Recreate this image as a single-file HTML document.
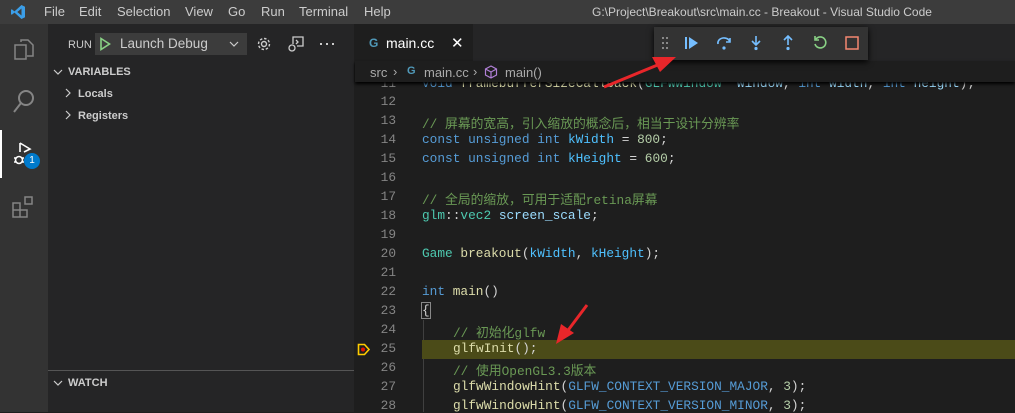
<!DOCTYPE html>
<html><head><meta charset="utf-8"><style>
*{margin:0;padding:0;box-sizing:border-box}
body{width:1015px;height:412px;overflow:hidden;background:#1e1e1e;font-family:"Liberation Sans","Noto Sans CJK SC",sans-serif;position:relative;color:#ccc}
.abs{position:absolute}
#title{left:0;top:0;width:1015px;height:24px;background:#3c3c3c;font-size:13px;color:#ccc}
#title span{position:absolute;top:4px}
#act{left:0;top:24px;width:48px;height:388px;background:#333}
#side{left:48px;top:24px;width:306px;height:388px;background:#252526;font-size:11px}
.code{font-family:"Liberation Mono","Noto Sans CJK SC",monospace;font-size:12.8px;white-space:pre;color:#d4d4d4}
.ln{position:absolute;left:355px;width:41px;text-align:right;color:#858585;font-family:"Liberation Mono",monospace;font-size:12.8px}
.cl{position:absolute;left:422px}
.k{color:#569cd6}.c{color:#6a9955}.f{color:#dcdcaa}.n{color:#b5cea8}.t{color:#4ec9b0}.v{color:#9cdcfe}.m{color:#4fc1ff}
</style></head><body>
<div id="title" class="abs">
<svg class="abs" style="left:10px;top:4px" width="16" height="16" viewBox="0 0 16 16"><path d="M11.5 1 L15 2.7 V13.3 L11.5 15 L4.5 8.6 L1.8 10.7 L1 10.2 V5.8 L1.8 5.3 L4.5 7.4 Z M11.5 4.5 L7.3 8 L11.5 11.5Z" fill="#3b9ee8" fill-rule="evenodd"/></svg>
<span style="left:44px">File</span><span style="left:79px">Edit</span><span style="left:117px">Selection</span><span style="left:185px">View</span><span style="left:228px">Go</span><span style="left:261px">Run</span><span style="left:299px">Terminal</span><span style="left:364px">Help</span>
<span style="left:592px;font-size:12px;top:5px">G:\Project\Breakout\src\main.cc - Breakout - Visual Studio Code</span>
</div>
<div id="act" class="abs">
<svg class="abs" style="left:12px;top:13px" width="24" height="24" viewBox="0 0 24 24" fill="none" stroke="#858585" stroke-width="1.5"><path d="M9 5V3h7l5 5v11h-6"/><rect x="3" y="8" width="11" height="14"/></svg>
<svg class="abs" style="left:12px;top:65px" width="24" height="26" viewBox="0 0 24 26" fill="none" stroke="#858585" stroke-width="2"><circle cx="14" cy="9" r="7"/><path d="M9 14L2 23"/></svg>
<div class="abs" style="left:0;top:106px;width:2px;height:48px;background:#fff"></div>
<svg class="abs" style="left:11px;top:117px" width="26" height="26" viewBox="0 0 26 26" fill="none" stroke="#fff" stroke-width="1.6"><path d="M9 2v9M9 2l10 6-6 3"/><circle cx="8" cy="19" r="3.5"/><path d="M3 17h2M3 21h2M11 17h2M11 21h2"/></svg>
<div class="abs" style="left:24px;top:129px;width:16px;height:16px;border-radius:50%;background:#007acc;color:#fff;font-size:10px;text-align:center;line-height:16px">1</div>
<svg class="abs" style="left:12px;top:171px" width="24" height="24" viewBox="0 0 24 24" fill="none" stroke="#858585" stroke-width="1.5"><path d="M1 8h7v7H1zM1 15h7v7H1zM8 15h7v7H8z"/><rect x="13" y="2" width="7" height="7"/></svg>
</div>
<div id="side" class="abs">
<span class="abs" style="left:20px;top:15px;font-size:11px;color:#ccc">RUN</span>
<div class="abs" style="left:47px;top:9px;width:152px;height:22px;background:#3c3c3c"></div>
<svg class="abs" style="left:51px;top:13px" width="12" height="14" viewBox="0 0 12 14"><path d="M2 1.5L10.5 7L2 12.5Z" fill="none" stroke="#89d185" stroke-width="1.6"/></svg>
<span class="abs" style="left:72px;top:12px;font-size:13.5px;color:#ccc">Launch Debug</span>
<svg class="abs" style="left:181px;top:16px" width="10" height="8" viewBox="0 0 10 8"><path d="M1 2l4 4 4-4" fill="none" stroke="#ccc" stroke-width="1.2"/></svg>
<svg class="abs" style="left:208px;top:12px" width="16" height="16" viewBox="0 0 16 16" fill="none" stroke="#ccc" stroke-width="1.4"><circle cx="8" cy="8" r="2.5"/><circle cx="8" cy="8" r="5.5" stroke-dasharray="2.5 1.8"/></svg>
<svg class="abs" style="left:239px;top:11px" width="18" height="18" viewBox="0 0 18 18" fill="none" stroke="#ccc" stroke-width="1.3"><path d="M6 9V2h10v9h-6M9 5l2 2-2 2"/><circle cx="5" cy="13" r="3"/></svg>
<svg class="abs" style="left:272px;top:18px" width="14" height="4"><g fill="#ccc"><rect x="0" y="1" width="2" height="2"/><rect x="6" y="1" width="2" height="2"/><rect x="12" y="1" width="2" height="2"/></g></svg>
<svg class="abs" style="left:5px;top:44px" width="10" height="8" viewBox="0 0 10 8"><path d="M1 2l4 4 4-4" fill="none" stroke="#ccc" stroke-width="1.2"/></svg>
<span class="abs" style="left:20px;top:42px;font-weight:bold;color:#ccc">VARIABLES</span>
<svg class="abs" style="left:16px;top:64px" width="8" height="10" viewBox="0 0 8 10"><path d="M2 1l4 4-4 4" fill="none" stroke="#ccc" stroke-width="1.2"/></svg>
<span class="abs" style="left:30px;top:64px;font-weight:bold;color:#ccc">Locals</span>
<svg class="abs" style="left:16px;top:86px" width="8" height="10" viewBox="0 0 8 10"><path d="M2 1l4 4-4 4" fill="none" stroke="#ccc" stroke-width="1.2"/></svg>
<span class="abs" style="left:30px;top:86px;font-weight:bold;color:#ccc">Registers</span>
<div class="abs" style="left:0;top:346px;width:306px;height:1px;background:#555"></div>
<svg class="abs" style="left:5px;top:355px" width="10" height="8" viewBox="0 0 10 8"><path d="M1 2l4 4 4-4" fill="none" stroke="#ccc" stroke-width="1.2"/></svg>
<span class="abs" style="left:20px;top:353px;font-weight:bold;color:#ccc">WATCH</span>
</div>
<!-- tabs -->
<div class="abs" style="left:355px;top:24px;width:660px;height:37px;background:#252526"></div>
<div class="abs" style="left:355px;top:24px;width:118px;height:37px;background:#1e1e1e"></div>
<span class="abs" style="left:369px;top:36px;font-size:12px;font-weight:bold;color:#519aba">G</span>
<span class="abs" style="left:386px;top:35px;font-size:14px;color:#fff">main.cc</span>
<span class="abs" style="left:451px;top:34px;font-size:15px;color:#fff">✕</span>
<!-- breadcrumb -->
<div class="abs" style="left:355px;top:61px;width:660px;height:21px;background:#1e1e1e;box-shadow:0 2px 3px #000;z-index:2;font-size:13px;color:#aaa">
<span class="abs" style="left:15px;top:4px">src</span><span class="abs" style="left:38px;top:3px">›</span>
<span class="abs" style="left:52px;top:4px;font-size:11px;font-weight:bold;color:#519aba">G</span>
<span class="abs" style="left:69px;top:4px">main.cc</span><span class="abs" style="left:118px;top:3px">›</span>
<svg class="abs" style="left:129px;top:4px" width="14" height="14" viewBox="0 0 14 14" fill="none" stroke="#b180d7" stroke-width="1.2"><path d="M7 1l5.5 3v6L7 13 1.5 10V4zM1.5 4L7 7l5.5-3M7 7v6"/></svg>
<span class="abs" style="left:150px;top:4px">main()</span>
</div>
<!-- code -->
<div class="code">
<div class="ln" style="top:76px">11</div><div class="cl" style="top:76px"><span class="k">void</span> <span class="f">framebufferSizeCallback</span>(<span class="t">GLFWwindow</span>* <span class="v">window</span>, <span class="k">int</span> <span class="v">width</span>, <span class="k">int</span> <span class="v">height</span>);</div>
<div class="ln" style="top:94px">12</div>
<div class="ln" style="top:113px">13</div><div class="cl c" style="top:113px">// 屏幕的宽高，引入缩放的概念后，相当于设计分辨率</div>
<div class="ln" style="top:132px">14</div><div class="cl" style="top:132px"><span class="k">const</span> <span class="k">unsigned</span> <span class="k">int</span> <span class="m">kWidth</span> = <span class="n">800</span>;</div>
<div class="ln" style="top:151px">15</div><div class="cl" style="top:151px"><span class="k">const</span> <span class="k">unsigned</span> <span class="k">int</span> <span class="m">kHeight</span> = <span class="n">600</span>;</div>
<div class="ln" style="top:170px">16</div>
<div class="ln" style="top:189px">17</div><div class="cl c" style="top:189px">// 全局的缩放，可用于适配retina屏幕</div>
<div class="ln" style="top:208px">18</div><div class="cl" style="top:208px"><span class="t">glm</span>::<span class="t">vec2</span> <span class="v">screen_scale</span>;</div>
<div class="ln" style="top:227px">19</div>
<div class="ln" style="top:246px">20</div><div class="cl" style="top:246px"><span class="t">Game</span> <span class="f">breakout</span>(<span class="m">kWidth</span>, <span class="m">kHeight</span>);</div>
<div class="ln" style="top:265px">21</div>
<div class="ln" style="top:284px">22</div><div class="cl" style="top:284px"><span class="k">int</span> <span class="f">main</span>()</div>
<div class="ln" style="top:303px">23</div><div class="cl" style="top:303px"><span style="outline:1px solid #888">{</span></div>
<div class="abs" style="left:423px;top:320px;width:1px;height:92px;background:#404040"></div>
<div class="ln" style="top:322px">24</div><div class="cl c" style="top:322px;left:453px">// 初始化glfw</div>
<div class="abs" style="left:422px;top:340px;width:593px;height:19px;background:#4b4b18"></div>
<svg class="abs" style="left:357px;top:343px" width="14" height="13" viewBox="0 0 14 13"><path d="M1.5 1.5h6l4.5 5-4.5 5h-6z" fill="none" stroke="#ffcc00" stroke-width="1.6"/><circle cx="6" cy="6.5" r="2" fill="#e51400"/></svg>
<div class="ln" style="top:341px">25</div><div class="cl" style="top:341px;left:453px"><span class="f">glfwInit</span>();</div>
<div class="ln" style="top:360px">26</div><div class="cl c" style="top:360px;left:453px">// 使用OpenGL3.3版本</div>
<div class="ln" style="top:379px">27</div><div class="cl" style="top:379px;left:453px"><span class="f">glfwWindowHint</span>(<span class="k">GLFW_CONTEXT_VERSION_MAJOR</span>, <span class="n">3</span>);</div>
<div class="ln" style="top:398px">28</div><div class="cl" style="top:398px;left:453px"><span class="f">glfwWindowHint</span>(<span class="k">GLFW_CONTEXT_VERSION_MINOR</span>, <span class="n">3</span>);</div>
</div>
<!-- debug toolbar -->
<div class="abs" style="left:654px;top:27px;width:214px;height:33px;background:#333;box-shadow:0 2px 6px #000;z-index:3">
<svg class="abs" style="left:8px;top:10px" width="8" height="13"><g fill="#888"><rect x="0" y="0" width="2" height="2"/><rect x="4" y="0" width="2" height="2"/><rect x="0" y="5" width="2" height="2"/><rect x="4" y="5" width="2" height="2"/><rect x="0" y="10" width="2" height="2"/><rect x="4" y="10" width="2" height="2"/></g></svg>
<svg class="abs" style="left:30px;top:8px" width="16" height="16" viewBox="0 0 16 16"><rect x="1" y="2" width="2" height="12" fill="#75beff"/><path d="M5 2l9 6-9 6z" fill="#75beff"/></svg>
<svg class="abs" style="left:62px;top:8px" width="16" height="16" viewBox="0 0 16 16" fill="none" stroke="#75beff" stroke-width="1.6"><path d="M2 9a6 5 0 0 1 12-2M14 3v4h-4"/><circle cx="8" cy="13" r="1.6" fill="#75beff" stroke="none"/></svg>
<svg class="abs" style="left:94px;top:8px" width="16" height="16" viewBox="0 0 16 16" fill="none" stroke="#75beff" stroke-width="1.6"><path d="M8 1v8M4 6l4 4 4-4"/><circle cx="8" cy="13.5" r="1.6" fill="#75beff" stroke="none"/></svg>
<svg class="abs" style="left:126px;top:8px" width="16" height="16" viewBox="0 0 16 16" fill="none" stroke="#75beff" stroke-width="1.6"><path d="M8 10V2M4 5l4-4 4 4"/><circle cx="8" cy="13.5" r="1.6" fill="#75beff" stroke="none"/></svg>
<svg class="abs" style="left:158px;top:8px" width="16" height="16" viewBox="0 0 16 16" fill="none" stroke="#89d185" stroke-width="1.6"><path d="M4 4a5.5 5.5 0 1 1-1 5M3 1v4h4"/></svg>
<svg class="abs" style="left:190px;top:8px" width="16" height="16" viewBox="0 0 16 16" fill="none" stroke="#f48771" stroke-width="1.5"><rect x="2" y="2" width="12" height="12"/></svg>
</div>
<!-- red arrows -->
<svg class="abs" style="left:0;top:0;z-index:4" width="1015" height="412"><path d="M604 87L660 64" stroke="#e8262a" stroke-width="3"/><path d="M676 57L652 57L660 72Z" fill="#e8262a"/>
<path d="M587 305L566 333" stroke="#e8262a" stroke-width="3"/><path d="M556 344L561 324L574 333Z" fill="#e8262a"/></svg>
</body></html>
